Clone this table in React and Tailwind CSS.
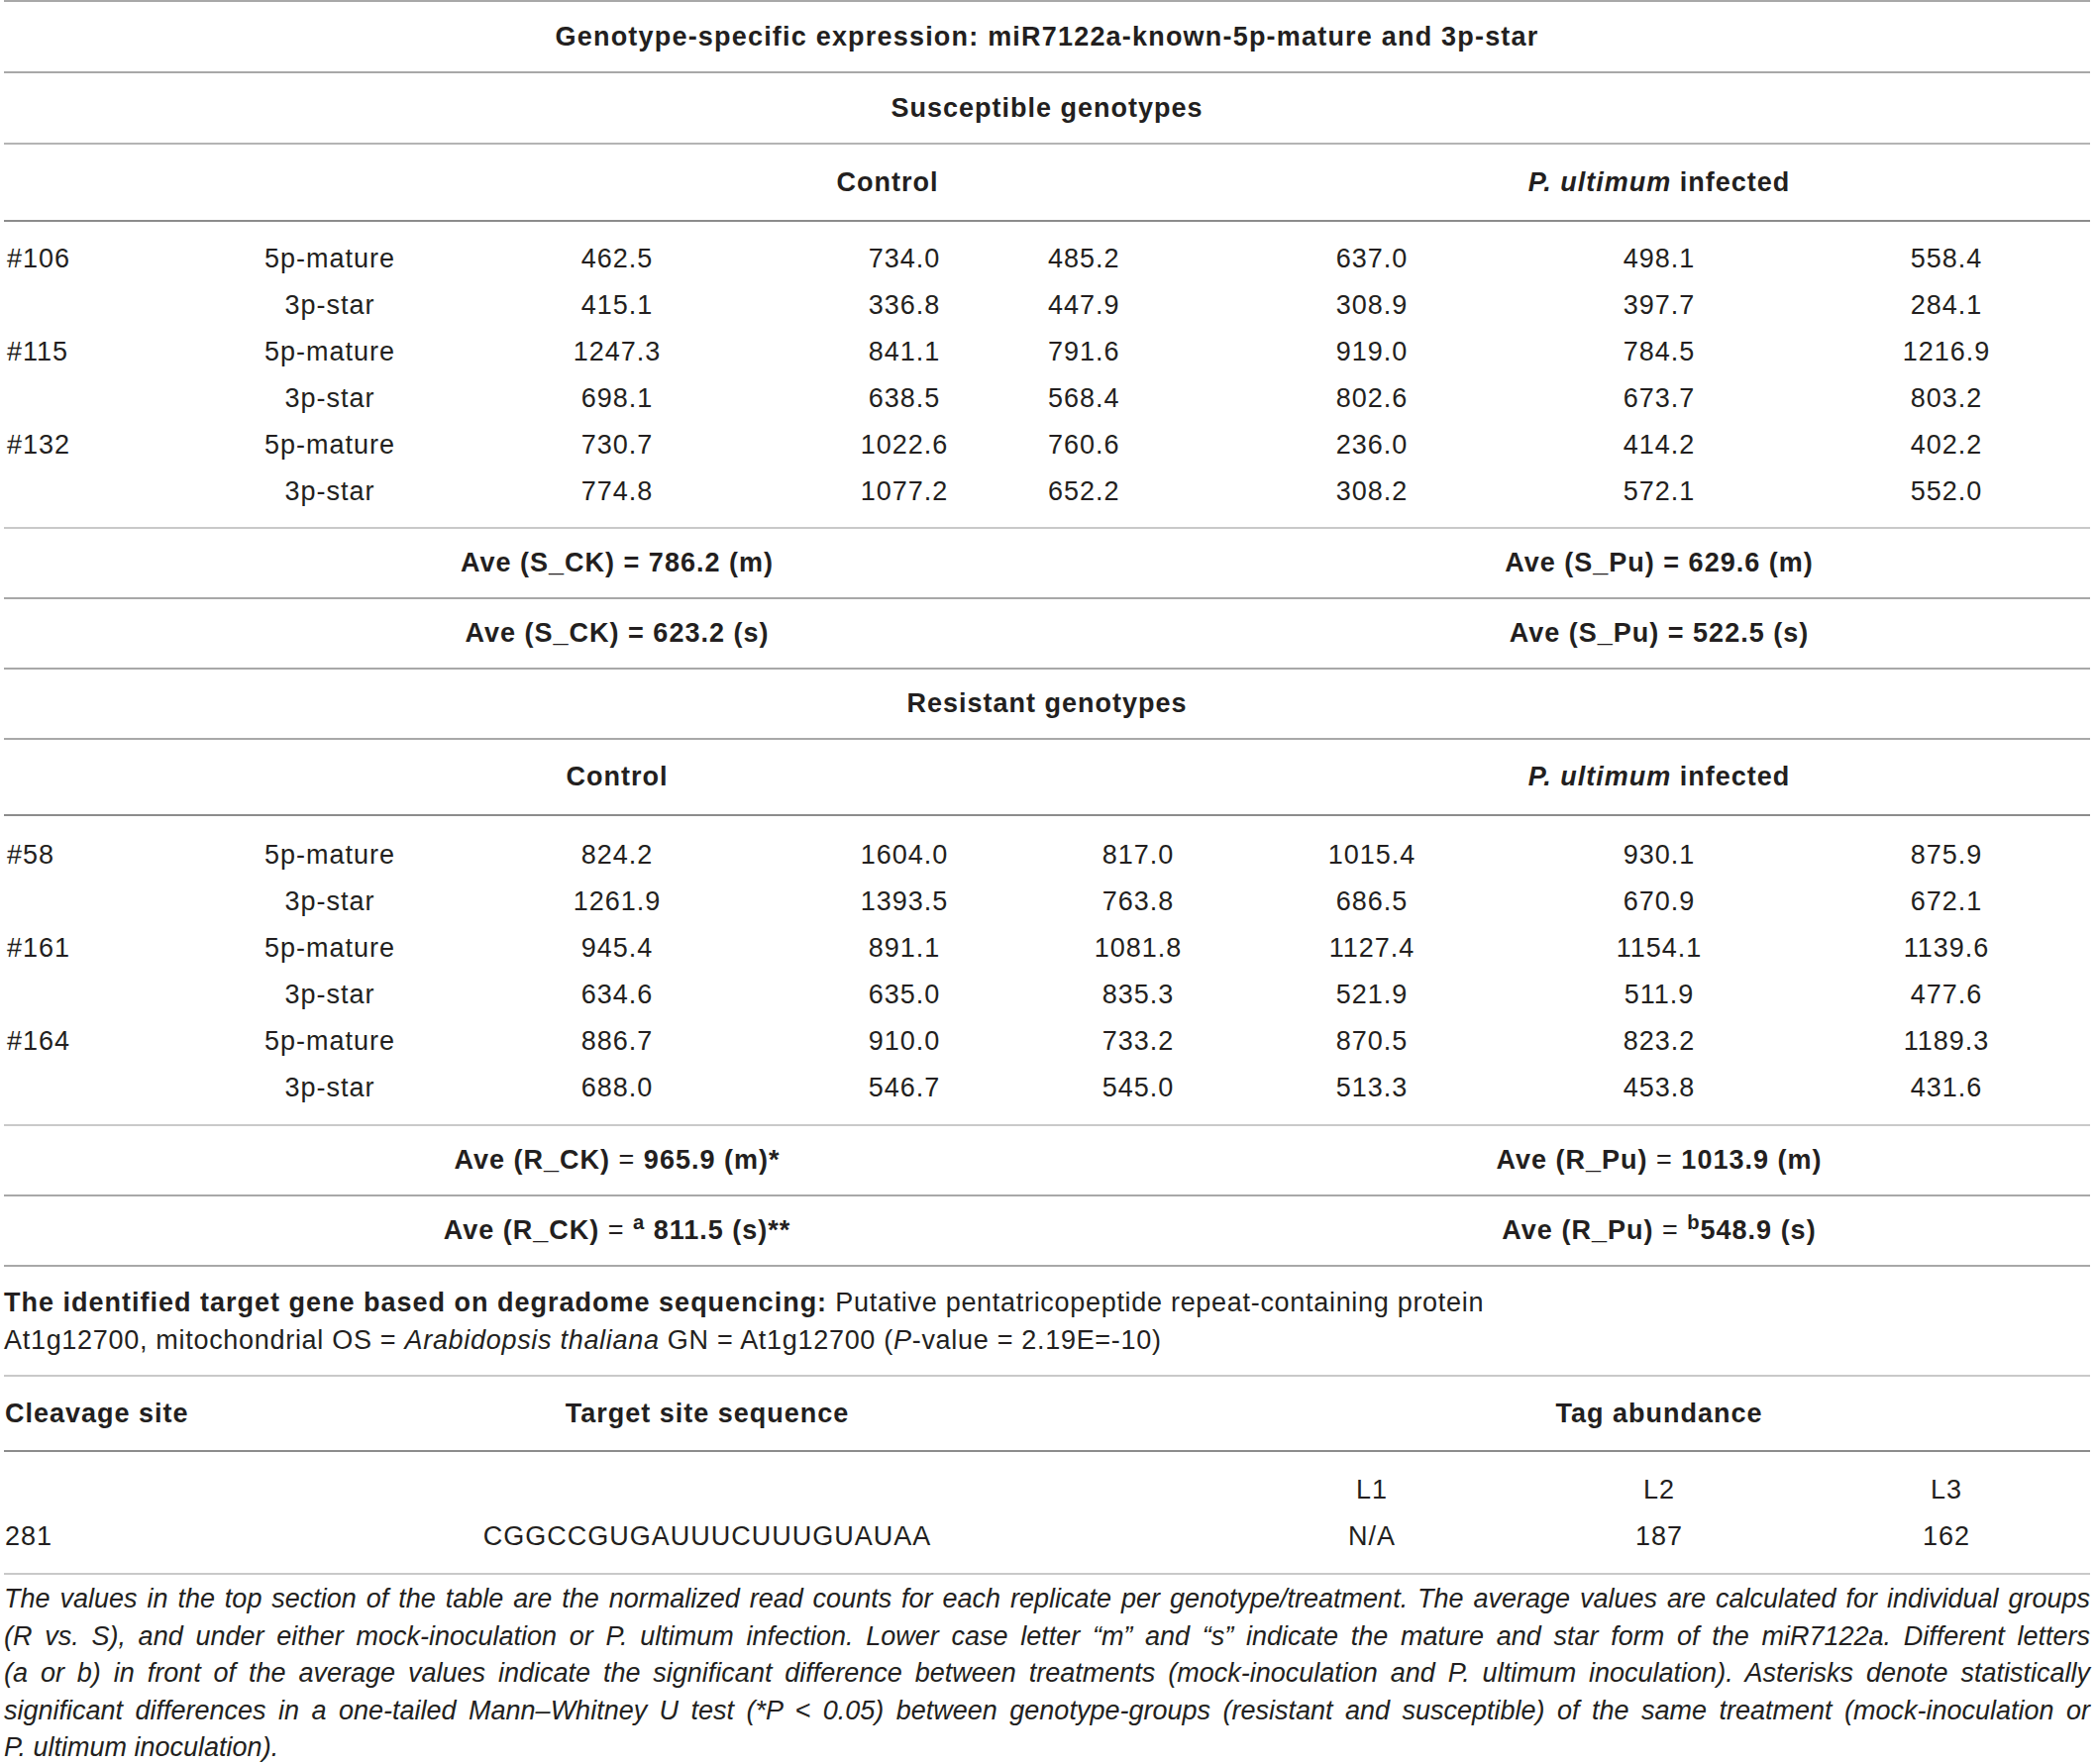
import React from 'react';

const COLS = 'grid grid-cols-[184px_290px_290px_290px_182px_290px_290px_290px]';

const susceptible = [
  ['#106', '5p-mature', '462.5', '734.0', '485.2', '637.0', '498.1', '558.4'],
  ['', '3p-star', '415.1', '336.8', '447.9', '308.9', '397.7', '284.1'],
  ['#115', '5p-mature', '1247.3', '841.1', '791.6', '919.0', '784.5', '1216.9'],
  ['', '3p-star', '698.1', '638.5', '568.4', '802.6', '673.7', '803.2'],
  ['#132', '5p-mature', '730.7', '1022.6', '760.6', '236.0', '414.2', '402.2'],
  ['', '3p-star', '774.8', '1077.2', '652.2', '308.2', '572.1', '552.0'],
];

const resistant = [
  ['#58', '5p-mature', '824.2', '1604.0', '817.0', '1015.4', '930.1', '875.9'],
  ['', '3p-star', '1261.9', '1393.5', '763.8', '686.5', '670.9', '672.1'],
  ['#161', '5p-mature', '945.4', '891.1', '1081.8', '1127.4', '1154.1', '1139.6'],
  ['', '3p-star', '634.6', '635.0', '835.3', '521.9', '511.9', '477.6'],
  ['#164', '5p-mature', '886.7', '910.0', '733.2', '870.5', '823.2', '1189.3'],
  ['', '3p-star', '688.0', '546.7', '545.0', '513.3', '453.8', '431.6'],
];

function DataBlock({ rows, leftFifth, className }) {
  return (
    <div className={`border-b-2 border-[#c9c9c9] ${className}`}>
      {rows.map((r, i) => (
        <div key={i} className={`${COLS} h-[47px] items-center`}>
          <div className="pl-[3px] text-left">{r[0]}</div>
          {r.slice(1).map((v, j) => (
            <div key={j} className={j === 3 && leftFifth ? 'text-left' : 'text-center'}>{v}</div>
          ))}
        </div>
      ))}
    </div>
  );
}

function AveRow({ left, right, border = 'border-[#a8a8a8]' }) {
  return (
    <div className={`${COLS} h-[71px] items-center border-b-2 ${border} font-bold`}>
      <div />
      <div className="col-span-3 flex justify-center whitespace-nowrap">{left}</div>
      <div />
      <div className="col-span-3 flex justify-center whitespace-nowrap">{right}</div>
    </div>
  );
}

function Infected() {
  return (
    <span>
      <i>P. ultimum</i> infected
    </span>
  );
}

export default function App() {
  return (
    <div className="w-[2116px] bg-white pl-[4px] pr-[6px] font-['Liberation_Sans',Arial,sans-serif] text-[27px] leading-none tracking-[1px] text-[#231f20]">
      <div className="border-t-2 border-[#a8a8a8]">
        <div className="flex h-[72px] items-center justify-center border-b-2 border-[#a8a8a8] font-bold tracking-[1.2px]">
          Genotype-specific expression: miR7122a-known-5p-mature and 3p-star
        </div>
        <div className="flex h-[72px] items-center justify-center border-b-2 border-[#b4b4b4] font-bold">
          Susceptible genotypes
        </div>
        <div className={`${COLS} h-[78px] items-center border-b-2 border-[#8c8c8c] font-bold`}>
          <div />
          <div />
          <div />
          <div className="pr-[34px] text-center whitespace-nowrap">Control</div>
          <div />
          <div className="col-span-3 text-center whitespace-nowrap"><Infected /></div>
        </div>
        <DataBlock rows={susceptible} leftFifth className="pt-[14px] pb-[12px]" />
        <AveRow left="Ave (S_CK) = 786.2 (m)" right="Ave (S_Pu) = 629.6 (m)" />
        <AveRow left="Ave (S_CK) = 623.2 (s)" right="Ave (S_Pu) = 522.5 (s)" />
        <div className="flex h-[71px] items-center justify-center border-b-2 border-[#a8a8a8] font-bold">
          Resistant genotypes
        </div>
        <div className={`${COLS} h-[77px] items-center border-b-2 border-[#8c8c8c] font-bold`}>
          <div />
          <div className="col-span-3 text-center whitespace-nowrap">Control</div>
          <div />
          <div className="col-span-3 text-center whitespace-nowrap"><Infected /></div>
        </div>
        <DataBlock rows={resistant} className="pt-[16px] pb-[13px]" />
        <AveRow
          left={<span>Ave (R_CK) <span className="font-normal">=</span> 965.9 (m)*</span>}
          right={<span>Ave (R_Pu) <span className="font-normal">=</span> 1013.9 (m)</span>}
        />
        <AveRow
          left={<span>Ave (R_CK) <span className="font-normal">=</span> <sup>a</sup> 811.5 (s)**</span>}
          right={<span>Ave (R_Pu) <span className="font-normal">=</span> <sup>b</sup>548.9 (s)</span>}
        />
        <div className="border-b-2 border-[#c9c9c9] pt-[17px] pb-[16px] leading-[38px] tracking-[0.7px]">
          <span className="font-bold tracking-[1px]">The identified target gene based on degradome sequencing:</span> Putative pentatricopeptide repeat-containing protein
          <br />
          At1g12700, mitochondrial OS = <i>Arabidopsis thaliana</i> GN = At1g12700 (<i>P</i>-value = 2.19E=-10)
        </div>
        <div className={`${COLS} h-[76px] items-center border-b-2 border-[#8c8c8c] font-bold`}>
          <div className="pl-[1px] whitespace-nowrap">Cleavage site</div>
          <div className="col-span-4 text-center whitespace-nowrap">Target site sequence</div>
          <div className="col-span-3 text-center whitespace-nowrap">Tag abundance</div>
        </div>
        <div className="border-b-2 border-[#c9c9c9] pt-[15px] pb-[13px]">
          <div className={`${COLS} h-[47px] items-center`}>
            <div />
            <div className="col-span-4" />
            <div className="text-center">L1</div>
            <div className="text-center">L2</div>
            <div className="text-center">L3</div>
          </div>
          <div className={`${COLS} h-[47px] items-center`}>
            <div className="pl-[1px]">281</div>
            <div className="col-span-4 text-center">CGGCCGUGAUUUCUUUGUAUAA</div>
            <div className="text-center">N/A</div>
            <div className="text-center">187</div>
            <div className="text-center">162</div>
          </div>
        </div>
        <div className="pt-[6px] text-[27px] italic leading-[37.5px] tracking-normal">
          <div className="whitespace-nowrap text-justify [text-align-last:justify]">
            The values in the top section of the table are the normalized read counts for each replicate per genotype/treatment. The average values are calculated for individual groups
          </div>
          <div className="whitespace-nowrap text-justify [text-align-last:justify]">
            (R vs. S), and under either mock-inoculation or P. ultimum infection. Lower case letter “m” and “s” indicate the mature and star form of the miR7122a. Different letters
          </div>
          <div className="whitespace-nowrap text-justify [text-align-last:justify]">
            (a or b) in front of the average values indicate the significant difference between treatments (mock-inoculation and P. ultimum inoculation). Asterisks denote statistically
          </div>
          <div className="whitespace-nowrap text-justify [text-align-last:justify]">
            significant differences in a one-tailed Mann–Whitney U test (*P &lt; 0.05) between genotype-groups (resistant and susceptible) of the same treatment (mock-inoculation or
          </div>
          <div>P. ultimum inoculation).</div>
        </div>
      </div>
    </div>
  );
}
